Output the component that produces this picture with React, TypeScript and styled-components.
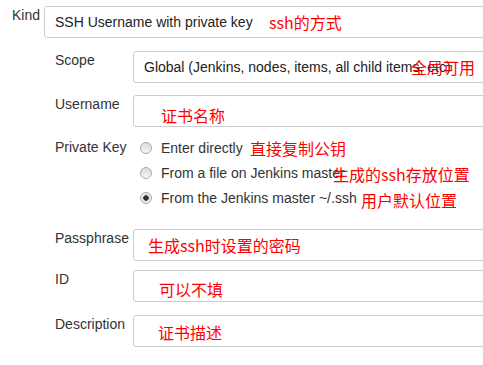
import styled, { createGlobalStyle } from 'styled-components';

const GlobalStyle = createGlobalStyle`
  html, body {
    margin: 0;
    padding: 0;
    background: #fff;
    overflow: hidden;
  }
  body {
    font-family: "Liberation Sans", Arial, sans-serif;
    font-size: 14px;
    color: #333;
  }
`;

const App = () => {
  return (
    <>
      <GlobalStyle />
      <Form>
        <KindRow>
          <KindLabel>Kind</KindLabel>
          <Field>
            SSH Username with private key
            <Note left={224}>ssh的方式</Note>
          </Field>
        </KindRow>

        <Nested>
          <Row top={13}>
            <Label>Scope</Label>
            <Field>
              Global (Jenkins, nodes, items, all child items, etc)
              <Note left={277}>全局可用</Note>
            </Field>
          </Row>

          <Row top={12}>
            <Label>Username</Label>
            <Field>
              <Note left={27} dy={4}>证书名称</Note>
            </Field>
          </Row>

          <Row top={11}>
            <Label>Private Key</Label>
            <RadioList>
              <RadioRow>
                <Radio />
                Enter directly
                <Note left={117}>直接复制公钥</Note>
              </RadioRow>
              <RadioRow>
                <Radio />
                From a file on Jenkins master
                <Note left={200} dy={1}>生成的ssh存放位置</Note>
              </RadioRow>
              <RadioRow>
                <Radio checked />
                From the Jenkins master ~/.ssh
                <Note left={228} dy={2}>用户默认位置</Note>
              </RadioRow>
            </RadioList>
          </Row>

          <Row top={21}>
            <Label>Passphrase</Label>
            <Field>
              <Note left={14}>生成ssh时设置的密码</Note>
            </Field>
          </Row>

          <Row top={9}>
            <Label>ID</Label>
            <Field>
              <Note left={25} dy={3}>可以不填</Note>
            </Field>
          </Row>

          <Row top={13}>
            <Label>Description</Label>
            <Field>
              <Note left={24} dy={1}>证书描述</Note>
            </Field>
          </Row>
        </Nested>
      </Form>
    </>
  );
};

const Form = styled.div`
  width: 483px;
  padding-top: 6px;
  display: flex;
  flex-direction: column;
`
const KindRow = styled.div`
  display: flex;
  padding-left: 12px;
`
const KindLabel = styled.div`
  width: 32px;
  padding-top: 1px;
  line-height: 16px;
`
const Nested = styled.div`
  display: flex;
  flex-direction: column;
  padding-left: 55px;
`
const Row = styled.div<{ top: number }>`
  display: flex;
  margin-top: ${p => p.top}px;
`
const Label = styled.div`
  width: 78px;
  flex-shrink: 0;
  padding-top: 1px;
  line-height: 16px;
  white-space: nowrap;
`
const Field = styled.div`
  position: relative;
  flex: 1;
  height: 32px;
  box-sizing: border-box;
  margin-right: -12px;
  padding-left: 10px;
  border: 1px solid #ccc;
  border-radius: 3px;
  display: flex;
  align-items: center;
  white-space: nowrap;
  color: #222;
`
const Note = styled.span<{ left: number; dy?: number }>`
  position: absolute;
  left: ${p => p.left}px;
  top: 50%;
  transform: translateY(calc(-50% + ${p => p.dy ?? 0}px));
  font-family: "Noto Sans CJK SC", sans-serif;
  font-size: 16px;
  line-height: 20px;
  color: #ff0000;
  white-space: nowrap;
`
const RadioList = styled.div`
  display: flex;
  flex-direction: column;
  gap: 5px;
`
const RadioRow = styled.div`
  position: relative;
  display: flex;
  align-items: center;
  gap: 9px;
  height: 20px;
  padding-left: 7px;
  white-space: nowrap;
`
const Radio = styled.span<{ checked?: boolean }>`
  width: 12px;
  height: 12px;
  flex-shrink: 0;
  box-sizing: border-box;
  border-radius: 50%;
  border: 1px solid #a9a9a9;
  background: ${p => p.checked
    ? 'radial-gradient(circle, #333 0 2.5px, #e6e6e6 3px, #f4f4f4 100%)'
    : 'linear-gradient(#dcdcdc, #f6f6f6)'};
`
export default App;
